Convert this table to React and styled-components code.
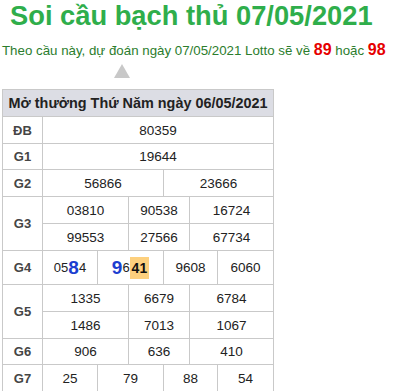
import React from "react";
import styled, { createGlobalStyle } from "styled-components";

const Global = createGlobalStyle`
  html, body { margin: 0; padding: 0; background: #fff; }
  body { font-family: "Liberation Sans", Arial, sans-serif; }
`;

const Page = styled.div`
  display: flex;
  flex-direction: column;
  align-items: flex-start;
  padding-left: 2px;
`;

const Title = styled.h1`
  margin: 0 0 0 8px;
  font-size: 27.3px;
  line-height: 31px;
  font-weight: bold;
  color: #2fae4b;
  white-space: nowrap;
`;

const Sub = styled.p`
  margin: 9px 0 0 0;
  font-size: 13.3px;
  line-height: 20px;
  color: #2b7d2d;
  white-space: nowrap;
`;

const Red = styled.b`
  color: #e60000;
  font-size: 16px;
`;

const Arrow = styled.div`
  width: 0;
  height: 0;
  margin: 3px 0 0 112px;
  border-left: 8px solid transparent;
  border-right: 8px solid transparent;
  border-bottom: 14px solid #c8c8c8;
`;

const Table = styled.div`
  margin-top: 11px;
  display: grid;
  grid-template-columns: 39px 54px 30px 34px 25px 27px 55px;
  grid-template-rows: 26px 26px 25px 26px 26px 26px 33px 26px 26px 25px 26px;
  gap: 1px;
  padding: 1px;
  background: #c9c9c9;
`;

const Cell = styled.div`
  grid-column: span ${(p) => p.$span || 1};
  grid-row: span ${(p) => p.$rows || 1};
  background: #fff;
  display: flex;
  align-items: center;
  justify-content: center;
  font-size: 13.5px;
  color: #222;
  white-space: nowrap;
`;

const Head = styled(Cell)`
  background: #dcdde4;
  font-weight: bold;
  font-size: 14.4px;
  color: #222;
`;

const Label = styled(Cell)`
  font-weight: bold;
  font-size: 13px;
  color: #454545;
`;

const Big = styled.b`
  font-size: 19px;
  color: #1c3ed0;
`;

const Hl = styled.b`
  background: #fdd07e;
  font-size: 14px;
  color: #111;
  padding: 3px 2px;
`;

const Small = styled.span`
  font-size: 13px;
`;

const rows = [
  { label: "ĐB", cells: [["80359", 6]] },
  { label: "G1", cells: [["19644", 6]] },
  { label: "G2", cells: [["56866", 3], ["23666", 3]] },
];

export default function App() {
  return (
    <>
      <Global />
      <Page>
        <Title>Soi cầu bạch thủ 07/05/2021</Title>
        <Sub>
          Theo cầu này, dự đoán ngày 07/05/2021 Lotto sẽ về <Red>89</Red> hoặc <Red>98</Red>
        </Sub>
        <Arrow />
        <Table>
          <Head $span={7}>Mở thưởng Thứ Năm ngày 06/05/2021</Head>
          {rows.map((r) => (
            <React.Fragment key={r.label}>
              <Label>{r.label}</Label>
              {r.cells.map(([v, s]) => (
                <Cell key={v} $span={s}>{v}</Cell>
              ))}
            </React.Fragment>
          ))}
          <Label $rows={2}>G3</Label>
          <Cell $span={2}>03810</Cell>
          <Cell $span={2}>90538</Cell>
          <Cell $span={2}>16724</Cell>
          <Cell $span={2}>99553</Cell>
          <Cell $span={2}>27566</Cell>
          <Cell $span={2}>67734</Cell>
          <Label>G4</Label>
          <Cell>
            <Small>05</Small><Big>8</Big><Small>4</Small>
          </Cell>
          <Cell $span={2}>
            <Big>9</Big><Small>6</Small><Hl>41</Hl>
          </Cell>
          <Cell $span={2}>9608</Cell>
          <Cell>6060</Cell>
          <Label $rows={2}>G5</Label>
          <Cell $span={2}>1335</Cell>
          <Cell $span={2}>6679</Cell>
          <Cell $span={2}>6784</Cell>
          <Cell $span={2}>1486</Cell>
          <Cell $span={2}>7013</Cell>
          <Cell $span={2}>1067</Cell>
          <Label>G6</Label>
          <Cell $span={2}>906</Cell>
          <Cell $span={2}>636</Cell>
          <Cell $span={2}>410</Cell>
          <Label>G7</Label>
          <Cell>25</Cell>
          <Cell $span={2}>79</Cell>
          <Cell $span={2}>88</Cell>
          <Cell>54</Cell>
        </Table>
      </Page>
    </>
  );
}
